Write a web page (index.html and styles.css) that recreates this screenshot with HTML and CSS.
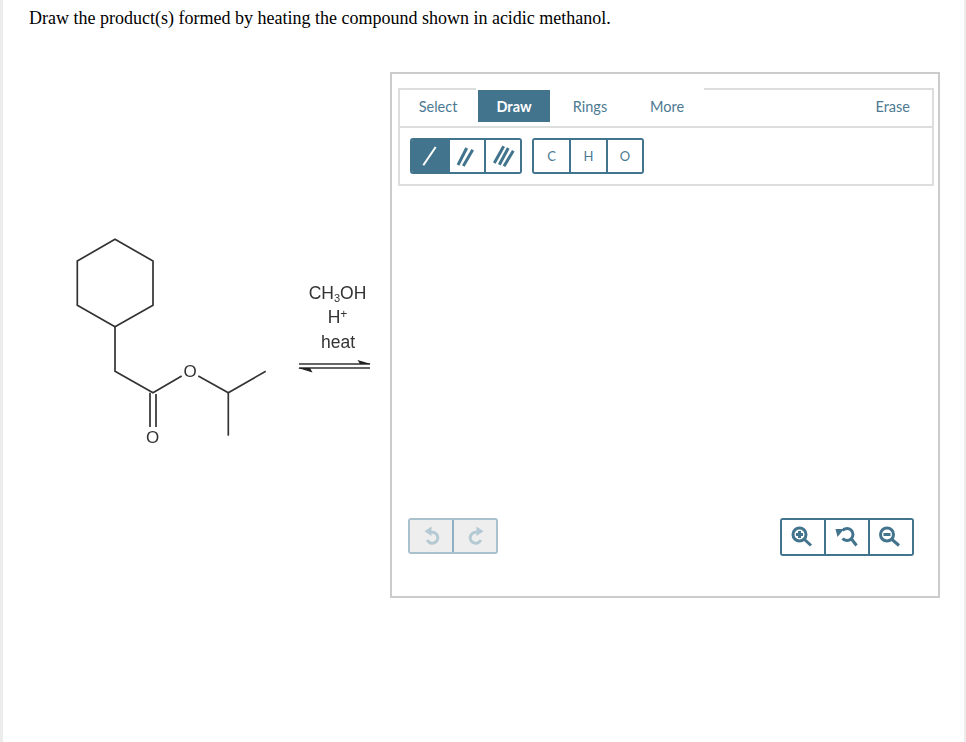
FILE: index.html
```html
<!DOCTYPE html>
<html lang="en">
<head>
  <meta charset="UTF-8">
  <meta name="viewport" content="width=device-width, initial-scale=1.0">
  <title>Draw the product</title>
  <link rel="stylesheet" href="styles.css">
</head>
<body>
  <p class="question">Draw the product(s) formed by heating the compound shown in acidic methanol.</p>

  <div class="content">
    <!-- Reaction picture -->
    <svg class="reaction" viewBox="3 230 387 220" width="387" height="220">
      <g class="bonds">
        <path d="M115 239.3 L153 261 V305.3 L115 326.7 L77.3 305.3 V261 Z"/>
        <path d="M115 326.7 V371.3 L153 392.7 L181.7 376"/>
        <path d="M198.3 376 L228.3 392.7 L265.700 371.3"/>
        <path d="M228.3 392.7 V435.7"/>
        <path d="M150 392.7 V427 M156 394 V427"/>
      </g>
      <text class="atom" x="190" y="376.5" text-anchor="middle">O</text>
      <text class="atom" x="152.5" y="442.5" text-anchor="middle">O</text>
      <text class="reagent" x="337.5" y="299" text-anchor="middle">CH<tspan class="sub" dy="3">3</tspan><tspan dy="-3">OH</tspan></text>
      <text class="reagent" x="337.5" y="323" text-anchor="middle">H<tspan class="sup" dy="-5">+</tspan></text>
      <text class="reagent" x="338" y="347.500" text-anchor="middle">heat</text>
      <g class="bonds">
        <path d="M299 364 H370 M299 368 H370"/>
      </g>
      <path class="arrowhead" d="M371 364 L357.500 360 L360 364 Z"/>
      <path class="arrowhead" d="M298 368 L312.500 372.500 L310 368 Z"/>
    </svg>

    <!-- Drawing tool -->
    <div class="widget">
      <div class="toolbar">
        <div class="tabs">
          <div class="tab tab-select">Select</div>
          <div class="tab tab-draw">Draw</div>
          <div class="tab tab-rings">Rings</div>
          <div class="tab tab-more">More</div>
          <div class="tab tab-erase">Erase</div>
        </div>
        <div class="tools">
          <div class="btn-group bond-group">
            <div class="btn bond-btn active">
              <svg class="bond-icon" viewBox="412 140 38 32"><path d="M423.300 165.300 L435.700 147"/></svg>
            </div>
            <div class="btn bond-btn">
              <svg class="bond-icon" viewBox="450 140 34 32"><path d="M458 165 L466.700 148 M463.300 166 L472.700 149.700"/></svg>
            </div>
            <div class="btn bond-btn">
              <svg class="bond-icon" viewBox="486 140 34 32"><path d="M494.300 163 L503.700 146.300 M499.300 164.700 L508.300 148 M504 166.300 L513.300 150.700"/></svg>
            </div>
          </div>
          <div class="btn-group atom-group">
            <div class="btn atom-btn atom-c">C</div>
            <div class="btn atom-btn atom-h">H</div>
            <div class="btn atom-btn atom-o">O</div>
          </div>
        </div>
      </div>

      <div class="canvas"></div>

      <div class="controls">
        <div class="btn-group history-group">
          <div class="btn history-btn">
            <svg class="history-icon" viewBox="0 0 20 20"><path class="ring" d="M10 6.400 A5.500 5.500 0 1 1 6.300 14"/><path class="solid" d="M3.500 5.300 L10.500 0.500 V10 Z"/></svg>
          </div>
          <div class="btn history-btn">
            <svg class="history-icon" viewBox="0 0 20 20"><path class="ring" d="M12 6.400 A5.500 5.500 0 1 0 15.700 14"/><path class="solid" d="M18.500 5.300 L11.500 0.500 V10 Z"/></svg>
          </div>
        </div>
        <div class="btn-group zoom-group">
          <div class="btn zoom-btn">
            <svg class="zoom-icon" viewBox="0 0 24 24"><circle class="ring" cx="8.500" cy="9.500" r="6.500"/><path class="ring" d="M13.500 14.500 L20 20.500 M5 9.500 H12 M8.500 6 V13"/></svg>
          </div>
          <div class="btn zoom-btn">
            <svg class="zoom-icon" viewBox="0 0 24 24"><path class="ring" d="M7.500 5.500 A6 6 0 1 1 7.500 13.500 M16.500 14 L21.500 20.500"/><path class="solid" d="M0.500 4 L9 4 L2.500 12 Z"/></svg>
          </div>
          <div class="btn zoom-btn">
            <svg class="zoom-icon" viewBox="0 0 24 24"><circle class="ring" cx="8" cy="9.500" r="6.500"/><path class="ring" d="M13 14.500 L20 20.500 M4.500 9.500 H11.500"/></svg>
          </div>
        </div>
      </div>
    </div>
  </div>
</body>
</html>
```

FILE: styles.css
```css
* {
  margin: 0;
  padding: 0;
  box-sizing: border-box;
}

body {
  height: 742px;
  overflow: hidden;
  background-color: #fff;
  border-left: 3px solid #ececec;
  border-right: 2px solid #ececec;
  font-family: Lato, sans-serif;
}

.question {
  padding: 8px 0 0 26px;
  font-family: "Liberation Serif", serif;
  font-size: 18px;
  line-height: 20px;
  color: #000;
}

.content {
  display: flex;
  margin-top: 44px;
}

/* Reaction picture */
.reaction {
  flex: none;
  margin-top: 158px;
  overflow: visible;
  filter: blur(0.4px);
}

.bonds path {
  fill: none;
  stroke: #333;
  stroke-width: 1.7;
}

.arrowhead {
  fill: #222;
}

.atom {
  font-family: "Liberation Sans", sans-serif;
  font-size: 17px;
  fill: #333;
}

.reagent {
  font-family: "Liberation Sans", sans-serif;
  font-size: 17.500px;
  fill: #333;
}

.reagent .sub {
  font-size: 11px;
}

.reagent .sup {
  font-size: 12px;
}

/* Drawing tool */
.widget {
  display: flex;
  flex-direction: column;
  width: 550px;
  height: 526px;
  padding: 14px 4px 0 6px;
  border: 2px solid #ccc;
}

.toolbar {
  border: 2px solid #ddd;
  border-top: none;
}

.tabs {
  display: flex;
  height: 40px;
  margin-left: -2px;
  padding-bottom: 4px;
  border-bottom: 2px solid #ddd;
  font-size: 14.500px;
  color: #4d7a92;
}

.tab {
  display: flex;
  align-items: center;
  justify-content: center;
  border-top: 2px solid transparent;
  background-clip: padding-box;
}

.tab-select {
  width: 78px;
  margin-right: 2px;
  border-top-color: #ddd;
  border-left: 2px solid #ddd;
  border-top-left-radius: 3px;
}

.tab-draw {
  width: 72px;
  background-color: #43748d;
  color: #fff;
  font-weight: 700;
}

.tab-rings {
  width: 80px;
}

.tab-more {
  width: 74px;
}

.tab-erase {
  flex: 1;
  justify-content: flex-end;
  margin-right: -2px;
  padding-right: 24px;
  border-top-color: #ddd;
  border-top-right-radius: 3px;
}

.tools {
  display: flex;
  gap: 10px;
  height: 56px;
  padding: 10px 0 0 10px;
}

.btn-group {
  display: flex;
  overflow: hidden;
  border: 2px solid #43748d;
  border-radius: 3px;
}

.btn {
  display: flex;
  align-items: center;
  justify-content: center;
  background-color: #fff;
}

.btn + .btn {
  border-left: 2px solid #43748d;
}

.bond-group {
  width: 112px;
  height: 36px;
}

.bond-btn {
  width: 36px;
}

.bond-btn.active {
  width: 38px;
  background-color: #43748d;
}

.bond-btn.active + .bond-btn {
  width: 34px;
  border-left: none;
}

.bond-icon {
  display: block;
  width: 100%;
  height: 100%;
  fill: none;
  stroke: #43748d;
  stroke-width: 3;
}

.bond-btn.active .bond-icon {
  stroke: #fff;
  stroke-width: 2;
}

.bond-btn:last-child .bond-icon {
  flex: none;
  width: 34px;
}

.atom-group {
  width: 112px;
  height: 36px;
  font-size: 13px;
  color: #4d7a92;
}

.atom-c {
  width: 35px;
}

.atom-h {
  width: 37px;
}

.atom-o {
  width: 36px;
}

.canvas {
  flex: 1;
}

.controls {
  display: flex;
  justify-content: space-between;
  align-items: flex-start;
  height: 78px;
  padding: 0 20px 0 10px;
}

.history-group {
  width: 90px;
  height: 36px;
  border-color: #a9c1cd;
}

.history-btn {
  flex: 1;
  background-color: #eee;
}

.history-btn + .history-btn {
  border-left-color: #8fb0c0;
}

.zoom-group {
  width: 134px;
  height: 38px;
}

.zoom-btn {
  flex: 1;
}

.history-icon {
  width: 20px;
  height: 20px;
}

.zoom-icon {
  width: 24px;
  height: 24px;
}

.ring {
  fill: none;
  stroke: #43748d;
  stroke-width: 3;
}

.solid {
  fill: #43748d;
}

.history-btn .ring {
  stroke: #b3c9d3;
}

.history-btn .solid {
  fill: #b3c9d3;
}
```
